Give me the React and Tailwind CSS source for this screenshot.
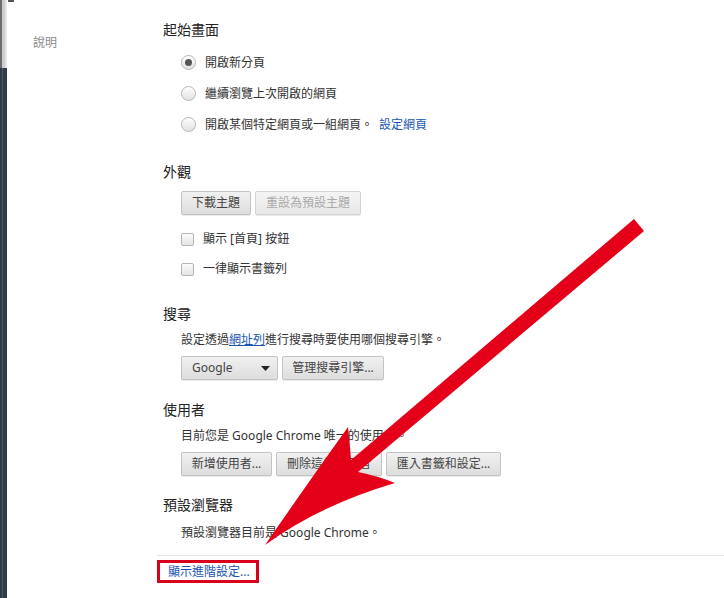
import React from 'react';

const font = { fontFamily: '"Noto Sans", "Noto Sans CJK TC", sans-serif' };

function Radio({ checked }) {
  return (
    <span className="w-[15px] h-[15px] rounded-full border border-[#b5b5b5] bg-linear-to-b from-[#fdfdfd] to-[#e2e2e2] shadow-[inset_0_1px_1px_rgba(255,255,255,0.9)] flex items-center justify-center">
      {checked && <span className="w-[7px] h-[7px] rounded-full bg-[#555]" />}
    </span>
  );
}

function Checkbox() {
  return (
    <span className="w-[13px] h-[13px] rounded-[2px] border border-[#b5b5b5] bg-linear-to-b from-[#fcfcfc] to-[#e4e4e4]" />
  );
}

function Button({ children, width, disabled }) {
  return (
    <div
      className={`h-[24px] rounded-[2px] border border-[#c3c3c3] bg-linear-to-b from-[#f1f1f1] to-[#dddddd] shadow-[0_1px_0_rgba(0,0,0,0.08)] flex items-center justify-center text-[12px] leading-[16px] ${disabled ? 'text-[#aaa] from-[#f4f4f4] to-[#e8e8e8] border-[#d3d3d3]' : 'text-[#444]'} ${width}`}
    >
      {children}
    </div>
  );
}

function Heading({ children, className = '' }) {
  return <h3 className={`text-[14px] leading-[20px] text-[#222] ${className}`}>{children}</h3>;
}

export default function App() {
  return (
    <div className="relative w-[724px] h-[598px] overflow-hidden bg-white flex" style={font}>
      {/* left window edge */}
      <div className="w-[7px] flex flex-col shrink-0">
        <div className="h-[68px] flex">
          <div className="w-[2px] bg-[#6c6c6c]" />
          <div className="w-[3px] bg-[#cdcdcd]" />
          <div className="w-[2px] bg-[#e6e6e6]" />
        </div>
        <div className="flex-1 flex">
          <div className="w-[2px] bg-[#2c3947]" />
          <div className="w-[1px] bg-[#4a5866]" />
          <div className="w-[4px] bg-[#2e3b48]" />
        </div>
      </div>

      {/* nav */}
      <div className="w-[148px] shrink-0">
        <div className="w-[6px] h-[2px] bg-[#555] ml-[1px]" />
        <div className="pl-[26px] mt-[33px] text-[12px] leading-[16px] text-[#8a8a8a]">說明</div>
      </div>

      {/* main */}
      <div className="flex-1 pt-[20px]">
        <div className="pl-[8px]">
          <Heading>起始畫面</Heading>
          <div className="mt-[7px] pl-[18px] text-[12px] text-[#333]">
            <div className="h-[31px] flex items-center gap-[9px]">
              <Radio checked />
              <span>開啟新分頁</span>
            </div>
            <div className="h-[31px] flex items-center gap-[9px]">
              <Radio />
              <span>繼續瀏覽上次開啟的網頁</span>
            </div>
            <div className="h-[31px] flex items-center gap-[9px]">
              <Radio />
              <span>開啟某個特定網頁或一組網頁。</span>
              <span className="-ml-[3px] text-[#1a55b0]">設定網頁</span>
            </div>
          </div>

          <Heading className="mt-[22px]">外觀</Heading>
          <div className="mt-[9px] pl-[18px] flex gap-[4px]">
            <Button width="w-[70px]">下載主題</Button>
            <Button width="w-[106px]" disabled>重設為預設主題</Button>
          </div>
          <div className="mt-[9px] pl-[18px] text-[12px] text-[#333]">
            <div className="h-[30px] flex items-center gap-[9px]">
              <Checkbox />
              <span>顯示 [首頁] 按鈕</span>
            </div>
            <div className="h-[30px] flex items-center gap-[9px]">
              <Checkbox />
              <span>一律顯示書籤列</span>
            </div>
          </div>

          <Heading className="mt-[20px]">搜尋</Heading>
          <div className="mt-[7px] pl-[18px] text-[12px] leading-[18px] text-[#333]">
            設定透過<span className="text-[#1a55b0] underline">網址列</span>進行搜尋時要使用哪個搜尋引擎。
          </div>
          <div className="mt-[7px] pl-[18px] flex gap-[4px]">
            <div className="w-[97px] h-[24px] rounded-[2px] border border-[#c3c3c3] bg-linear-to-b from-[#f1f1f1] to-[#dddddd] shadow-[0_1px_0_rgba(0,0,0,0.08)] flex items-center justify-between pl-[10px] pr-[7px] text-[12px] leading-[16px] text-[#444]">
              <span>Google</span>
              <svg width="9" height="5" viewBox="0 0 9 5">
                <path d="M0 0 L9 0 L4.5 5 Z" fill="#222" />
              </svg>
            </div>
            <Button width="w-[102px]">管理搜尋引擎...</Button>
          </div>

          <Heading className="mt-[20px]">使用者</Heading>
          <div className="mt-[7px] pl-[18px] text-[12px] leading-[18px] text-[#333]">
            目前您是 Google Chrome 唯一的使用者。
          </div>
          <div className="mt-[7px] pl-[18px] flex gap-[4px]">
            <Button width="w-[91px]">新增使用者...</Button>
            <Button width="w-[106px]">刪除這個使用者</Button>
            <Button width="w-[115px]">匯入書籤和設定...</Button>
          </div>

          <Heading className="mt-[19px]">預設瀏覽器</Heading>
          <div className="mt-[9px] pl-[18px] text-[12px] leading-[18px] text-[#333]">
            預設瀏覽器目前是 Google Chrome。
          </div>
        </div>

        <div className="mt-[13px] ml-[2px] h-[1px] bg-[#e6e6e6]" />
        <div className="mt-[4px] ml-[2px] w-[102px] h-[23px] border-[3px] border-[#d9001b] flex items-center pl-[8px] text-[12px] leading-[16px] text-[#1a55b0]">
          顯示進階設定...
        </div>
      </div>

      {/* red annotation arrow */}
      <svg className="absolute inset-0 pointer-events-none" width="724" height="598" viewBox="0 0 724 598">
        <path
          d="M634 219 L644 231 L358 472 Q378 476 395 483 Q320 505 265 545 Q310 480 348 427 Q350 444 351 460 Z"
          fill="#e5001a"
        />
      </svg>
    </div>
  );
}
